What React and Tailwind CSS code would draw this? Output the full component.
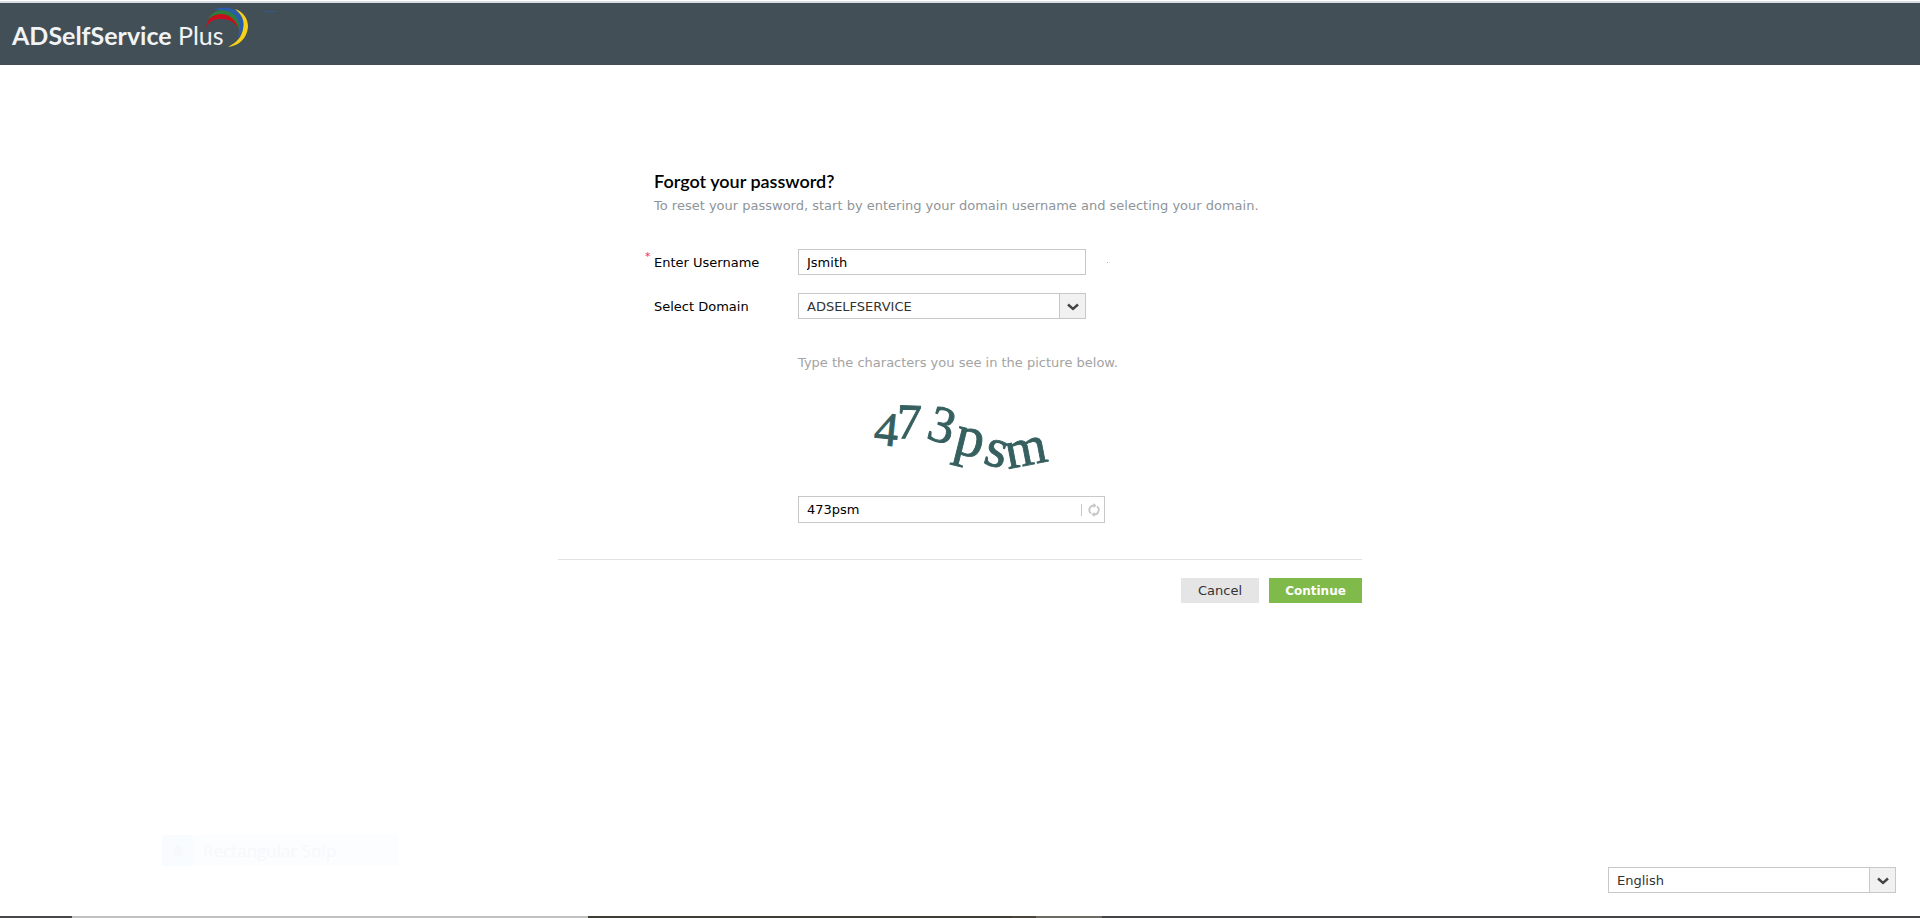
import React from 'react'

const bottomStrip = [
  { width: 72, color: 'bg-[#48484a]' },
  { width: 516, color: 'bg-[#c1c1c1]' },
  { width: 424, color: 'bg-[#403c36]' },
  { width: 24, color: 'bg-[#4a443a]' },
  { width: 66, color: 'bg-[#6c6a62]' },
  { width: 818, color: 'bg-[#454548]' },
]

function Logo() {
  return (
    <a href="#" className="relative block w-72 pl-3 pt-4 font-[Lato,sans-serif] text-[25px] leading-8 text-[#f1f3f4]">
      <span className="font-bold">ADSelfService</span> <span>Plus</span>
      <svg className="absolute left-[200px] top-1 h-10 w-20" viewBox="200 7 80 40" aria-hidden="true">
        <path d="M235 9C244 12 248 19 248 27C247 38 239 46 228 47C237 42 242 37 243 28C243 20 240 13 235 9Z" fill="#f7d117" />
        <path d="M214 10C221 6 232 7 238 12C245 18 246 29 238 38C240 29 239 22 234 17C229 12 222 10 214 10Z" fill="#2a5caa" />
        <path d="M208 19C213 11 220 9 227 11C235 13 240 20 240 31C236 21 231 17 225 16C219 14 213 15 208 19Z" fill="#2f7d3b" />
        <path d="M206 28C207 19 213 14 221 14C229 14 235 19 239 28C233 21 228 19 221 19C214 19 209 21 206 28Z" fill="#c8101c" />
        <path d="M263 11.500H276" stroke="#34598c" />
      </svg>
    </a>
  )
}

function Select({ options, ...props }) {
  return (
    <div className="relative w-72">
      <select className="block h-[26px] w-full appearance-none rounded-none border border-[#c8c8c8] bg-white pl-2 pr-8 pt-px text-[13px] text-[#333] outline-none" {...props}>
        {options.map((o) => (
          <option key={o}>{o}</option>
        ))}
      </select>
      <span className="pointer-events-none absolute bottom-px right-px top-px flex w-[26px] items-center justify-center border-l border-[#c8c8c8] bg-[#f1f1f1]">
        <svg className="mt-0.5 h-2 w-3" viewBox="0 0 12 8" fill="none" stroke="#444" strokeWidth="2.4">
          <path d="M1 1.500L6 6L11 1.500" />
        </svg>
      </span>
    </div>
  )
}

function Captcha() {
  return (
    <svg
      className="ml-[72px] block h-24 w-48 overflow-visible"
      viewBox="870 395 192 96"
      role="img"
      aria-label="Captcha"
      fill="#36605f"
      stroke="#36605f"
      strokeWidth="0.9"
      fontFamily="'Liberation Serif', serif"
    >
      <text fontSize="48" transform="translate(873 444) rotate(6)">4</text>
      <text fontSize="50" transform="translate(896 438) rotate(2)">7</text>
      <text fontSize="52" transform="translate(925 438) rotate(16)">3</text>
      <text fontSize="58" transform="translate(952 452) rotate(14)">p</text>
      <text fontSize="56" transform="translate(982 463) rotate(16)">s</text>
      <text fontSize="54" transform="translate(1008 469) rotate(-11)">m</text>
    </svg>
  )
}

export default function App() {
  return (
    <div className="flex min-h-screen flex-col bg-white font-['DejaVu_Sans',Verdana,sans-serif] text-[13px] leading-5 text-black">
      <header className="mt-px h-16 border-t-2 border-[#d9dce2] bg-[#434f56]">
        <Logo />
      </header>

      <main className="flex-1">
        <form className="mx-auto w-full max-w-[804px] pt-[104px]" onSubmit={(e) => e.preventDefault()}>
          <div className="pl-24">
            <h1 className="font-[Lato,sans-serif] text-lg font-semibold leading-6">Forgot your password?</h1>
            <p className="mt-[3px] whitespace-nowrap text-[#8f9599]">
              To reset your password, start by entering your domain username and selecting your domain.
            </p>

            <div className="mt-[33px] flex items-center">
              <label htmlFor="username" className="relative w-36 shrink-0 pt-0.5">
                <span className="absolute -left-[9px] -top-1 text-[11px] text-red-500">*</span>
                Enter Username
              </label>
              <input id="username" type="text" defaultValue="Jsmith" className="h-[26px] w-72 border border-[#c8c8c8] px-2 outline-none" />
              <span className="ml-[21px] h-px w-px bg-[#b5aa98]" />
            </div>

            <div className="mt-[18px] flex items-center">
              <label htmlFor="domain" className="w-36 shrink-0 pt-0.5">Select Domain</label>
              <Select id="domain" options={['ADSELFSERVICE']} />
            </div>

            <div className="ml-36 mt-[34px]">
              <label htmlFor="captcha" className="block text-[#a3a3a3]">Type the characters you see in the picture below.</label>
              <div className="mt-[22px]">
                <Captcha />
              </div>
              <div className="mt-[5px] flex h-[27px] w-[307px] items-center border border-[#c8c8c8]">
                <input id="captcha" type="text" defaultValue="473psm" className="min-w-0 flex-1 pl-2 outline-none" />
                <button type="button" aria-label="Refresh" className="mr-1 flex h-3 items-center border-l border-[#c8c8c8] pl-1.5">
                  <svg className="h-3.5 w-3" viewBox="0 0 12 14" fill="none" stroke="#c4c6c8" strokeWidth="1.8">
                    <path d="M3 10.500A4.500 4.500 0 0 1 6 2.500M9 3.500A4.500 4.500 0 0 1 6 11.500" />
                    <path d="M5.500 0L8.500 2.500L5.500 5ZM6.500 9L3.500 11.500L6.500 14Z" fill="#c4c6c8" stroke="none" />
                  </svg>
                </button>
              </div>
            </div>
          </div>

          <div className="mt-9 flex justify-end gap-2.5 border-t border-[#e2e2e2] pt-[18px]">
            <button type="button" className="h-[25px] w-[78px] bg-[#e5e5e5] text-[#333]">Cancel</button>
            <button type="submit" className="h-[25px] w-[93px] bg-[#80ba4a] text-xs font-bold text-white">Continue</button>
          </div>
        </form>
      </main>

      <footer>
        <div className="flex items-start justify-between pl-[162px] pr-6">
          <div className="flex h-[31px] w-[236px] items-center bg-[#fbfdff] font-['Open_Sans',sans-serif] text-[17px] text-[#f7f8f9]">
            <span className="mr-[10px] flex h-full w-[31px] items-center justify-center bg-[#f8fcff]">
              <span className="h-2.5 w-2.5 rounded-full bg-[#f6f8f9]" />
            </span>
            Rectangular Snip
          </div>
          <div className="pb-[23px] pt-8">
            <Select id="language" aria-label="Language" options={['English']} />
          </div>
        </div>
        <div className="flex h-0.5">
          {bottomStrip.map((s, i) => (
            <span key={i} className={s.color} style={{ flexGrow: s.width }} />
          ))}
        </div>
      </footer>
    </div>
  )
}
